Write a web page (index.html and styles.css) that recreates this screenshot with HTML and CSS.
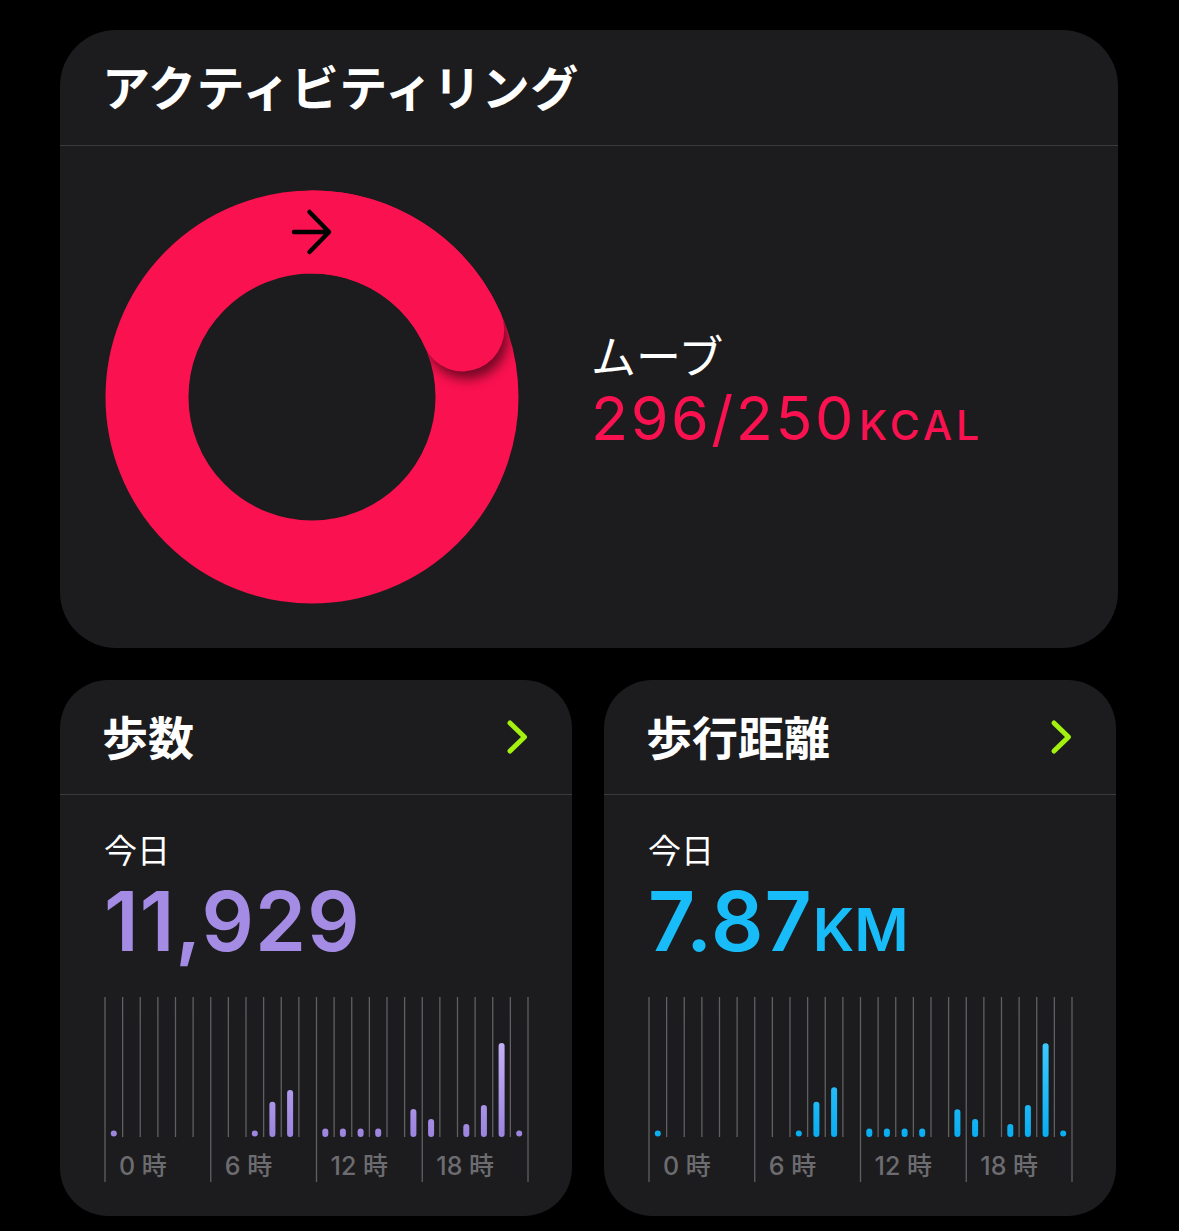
FILE: index.html
```html
<!DOCTYPE html>
<html lang="ja">
<head>
<meta charset="utf-8">
<title>アクティビティ</title>
<link rel="stylesheet" href="styles.css">
</head>
<body>
<main class="page">
  <section class="card card-ring">
    <header class="card-head">
      <h1 class="title">アクティビティリング</h1>
    </header>
    <div class="ring-body">
      <svg class="ring" width="414" height="414" viewBox="0 0 414 414">
        <defs>
          <clipPath id="annulus">
            <path clip-rule="evenodd" d="M207 0.5a206.5 206.5 0 1 0 0.001 0Z M207 83.5a123.5 123.5 0 1 0 0.001 0Z"/>
          </clipPath>
          <filter id="blur" x="-50%" y="-50%" width="200%" height="200%">
            <feGaussianBlur stdDeviation="6"/>
          </filter>
        </defs>
        <circle cx="207" cy="207" r="165" fill="none" stroke="#FA114F" stroke-width="83"/>
        <g clip-path="url(#annulus)">
          <circle cx="362" cy="148" r="41" fill="#000" opacity="0.55" filter="url(#blur)"/>
        </g>
        <path d="M207 42 A165 165 0 0 1 357.73 139.89" fill="none" stroke="#FA114F" stroke-width="83" stroke-linecap="round"/>
        <path d="M189 42 H223 M204.5 22 L224 42 L204.5 62" fill="none" stroke="#000" stroke-width="4.5" stroke-linecap="round" stroke-linejoin="round"/>
      </svg>
      <div class="ring-info">
        <div class="ring-label">ムーブ</div>
        <div class="ring-value">296/250<span class="ring-unit">KCAL</span></div>
      </div>
    </div>
  </section>

  <div class="row">
    <section class="card card-small">
      <header class="card-head">
        <h2 class="title title-small">歩数</h2>
        <svg class="chev" width="24" height="36" viewBox="0 0 24 36"><path d="M4 4 L18.5 18 L4 32" fill="none" stroke="#A4F00F" stroke-width="5" stroke-linecap="round" stroke-linejoin="round"/></svg>
      </header>
      <div class="small-body">
        <div class="today">今日</div>
        <div class="big-num num-steps">11,929</div>
        <svg class="chart" width="426" height="186" viewBox="0 0 426 186">
          <defs>
            <linearGradient id="gp" gradientUnits="userSpaceOnUse" x1="0" y1="40" x2="0" y2="140">
              <stop offset="0" stop-color="#C6B3F7"/>
              <stop offset="1" stop-color="#9C84DF"/>
            </linearGradient>
          </defs>
          <path class="grid" d="M18.625 0V140M36.25 0V140M53.875 0V140M71.5 0V140M89.125 0V140M124.375 0V140M142 0V140M159.625 0V140M177.25 0V140M194.875 0V140M230.125 0V140M247.75 0V140M265.375 0V140M283 0V140M300.625 0V140M335.875 0V140M353.5 0V140M371.125 0V140M388.75 0V140M406.375 0V140"/>
          <path class="grid" d="M1 0V185M106.75 0V185M212.5 0V185M318.25 0V185M424 0V185"/>
          <g fill="url(#gp)" stroke="url(#gp)" stroke-width="6" stroke-linecap="round">
            <circle cx="9.8" cy="136.5" r="3" stroke="none"/>
            <circle cx="150.8" cy="136.5" r="3" stroke="none"/>
            <line x1="168.4" y1="107.7" x2="168.4" y2="137"/>
            <line x1="186.1" y1="96" x2="186.1" y2="137"/>
            <line x1="221.3" y1="134.5" x2="221.3" y2="137"/>
            <line x1="238.9" y1="134.5" x2="238.9" y2="137"/>
            <line x1="256.6" y1="134.5" x2="256.6" y2="137"/>
            <line x1="274.2" y1="134.5" x2="274.2" y2="137"/>
            <line x1="309.4" y1="115" x2="309.4" y2="137"/>
            <line x1="327.1" y1="125" x2="327.1" y2="137"/>
            <line x1="362.3" y1="130" x2="362.3" y2="137"/>
            <line x1="379.9" y1="111" x2="379.9" y2="137"/>
            <line x1="397.6" y1="49" x2="397.6" y2="137"/>
            <circle cx="415.2" cy="136.5" r="3" stroke="none"/>
          </g>
          <g class="axis">
            <text x="15" y="178">0 時</text>
            <text x="120.75" y="178">6 時</text>
            <text x="226.5" y="178">12 時</text>
            <text x="332.25" y="178">18 時</text>
          </g>
        </svg>
      </div>
    </section>

    <section class="card card-small">
      <header class="card-head">
        <h2 class="title title-small">歩行距離</h2>
        <svg class="chev" width="24" height="36" viewBox="0 0 24 36"><path d="M4 4 L18.5 18 L4 32" fill="none" stroke="#A4F00F" stroke-width="5" stroke-linecap="round" stroke-linejoin="round"/></svg>
      </header>
      <div class="small-body">
        <div class="today">今日</div>
        <div class="big-num num-dist">7.87<span class="big-unit">KM</span></div>
        <svg class="chart" width="426" height="186" viewBox="0 0 426 186">
          <defs>
            <linearGradient id="gb" gradientUnits="userSpaceOnUse" x1="0" y1="40" x2="0" y2="140">
              <stop offset="0" stop-color="#3FCCFF"/>
              <stop offset="1" stop-color="#0AADF2"/>
            </linearGradient>
          </defs>
          <path class="grid" d="M18.625 0V140M36.25 0V140M53.875 0V140M71.5 0V140M89.125 0V140M124.375 0V140M142 0V140M159.625 0V140M177.25 0V140M194.875 0V140M230.125 0V140M247.75 0V140M265.375 0V140M283 0V140M300.625 0V140M335.875 0V140M353.5 0V140M371.125 0V140M388.75 0V140M406.375 0V140"/>
          <path class="grid" d="M1 0V185M106.75 0V185M212.5 0V185M318.25 0V185M424 0V185"/>
          <g fill="url(#gb)" stroke="url(#gb)" stroke-width="6" stroke-linecap="round">
            <circle cx="9.8" cy="136.5" r="3" stroke="none"/>
            <circle cx="150.8" cy="136.5" r="3" stroke="none"/>
            <line x1="168.4" y1="107.7" x2="168.4" y2="137"/>
            <line x1="186.1" y1="93.3" x2="186.1" y2="137"/>
            <line x1="221.3" y1="134.5" x2="221.3" y2="137"/>
            <line x1="238.9" y1="134.5" x2="238.9" y2="137"/>
            <line x1="256.6" y1="134.5" x2="256.6" y2="137"/>
            <line x1="274.2" y1="134.5" x2="274.2" y2="137"/>
            <line x1="309.4" y1="115.3" x2="309.4" y2="137"/>
            <line x1="327.1" y1="125" x2="327.1" y2="137"/>
            <line x1="362.3" y1="130" x2="362.3" y2="137"/>
            <line x1="379.9" y1="111" x2="379.9" y2="137"/>
            <line x1="397.6" y1="49.3" x2="397.6" y2="137"/>
            <circle cx="415.2" cy="136.5" r="3" stroke="none"/>
          </g>
          <g class="axis">
            <text x="15" y="178">0 時</text>
            <text x="120.75" y="178">6 時</text>
            <text x="226.5" y="178">12 時</text>
            <text x="332.25" y="178">18 時</text>
          </g>
        </svg>
      </div>
    </section>
  </div>
</main>
</body>
</html>
```

FILE: styles.css
```css
html, body {
  margin: 0;
  padding: 0;
  background: #000;
}

body {
  width: 1179px;
  height: 1231px;
  overflow: hidden;
  font-family: Inter, "Noto Sans CJK JP", sans-serif;
  color: #fff;
}

.page {
  padding: 30px 0 0 60px;
}

.card {
  background: #1c1c1e;
  box-sizing: border-box;
  overflow: hidden;
}

.card-ring {
  width: 1058px;
  height: 618px;
  border-radius: 56px;
}

.card-head {
  display: flex;
  align-items: center;
  justify-content: space-between;
  box-sizing: border-box;
  height: 116px;
  padding: 0 44px 6px 42px;
  border-bottom: 1px solid #3a3a3c;
}

.title {
  margin: 0;
  font-family: "Noto Sans CJK JP", sans-serif;
  font-weight: 700;
  font-size: 48px;
  line-height: 56px;
  letter-spacing: 0.5px;
  color: #fff;
}

.title-small {
  font-size: 46px;
  letter-spacing: 0;
}

.ring-body {
  display: flex;
  align-items: center;
  padding: 44px 45px 0 45px;
}

.ring {
  display: block;
  flex: none;
}

.ring-info {
  margin-left: 72px;
  margin-bottom: 7px;
}

.ring-label {
  font-family: "Noto Sans CJK JP", sans-serif;
  font-weight: 400;
  font-size: 45px;
  line-height: 44px;
  color: #fff;
}

.ring-value {
  margin-top: 11px;
  font-family: Inter, sans-serif;
  font-weight: 400;
  font-size: 61px;
  line-height: 60px;
  color: #FA114F;
  letter-spacing: 2.5px;
  white-space: nowrap;
}

.ring-unit {
  margin-left: 3px;
  font-size: 41px;
  font-weight: 500;
  letter-spacing: 4px;
}

.row {
  display: flex;
  gap: 32px;
  margin-top: 32px;
}

.card-small {
  width: 512px;
  height: 536px;
  border-radius: 48px;
}

.card-small .card-head {
  height: 115px;
  padding-bottom: 4px;
}

.chev {
  display: block;
  margin-right: -2px;
  margin-top: 4px;
}

.small-body {
  padding: 0 44px;
}

.today {
  margin-top: 34px;
  font-family: "Noto Sans CJK JP", sans-serif;
  font-size: 33px;
  line-height: 40px;
  color: #fff;
}

.big-num {
  margin-top: 12px;
  height: 82px;
  font-family: Inter, sans-serif;
  font-weight: 600;
  font-size: 82px;
  line-height: 82px;
  letter-spacing: 1px;
  white-space: nowrap;
}

.num-steps {
  color: #A48BE3;
}

.num-dist {
  color: #18BCF8;
}

.big-unit {
  font-size: 59px;
  line-height: 0;
  letter-spacing: 0;
  margin-left: 0;
}

.chart {
  display: block;
  margin-top: 34px;
  overflow: visible;
}

.grid {
  fill: none;
  stroke: #606064;
  stroke-width: 1.3;
}

.axis text {
  font-family: Inter, "Noto Sans CJK JP", sans-serif;
  font-size: 25px;
  font-weight: 500;
  fill: #6c6c70;
}
```
